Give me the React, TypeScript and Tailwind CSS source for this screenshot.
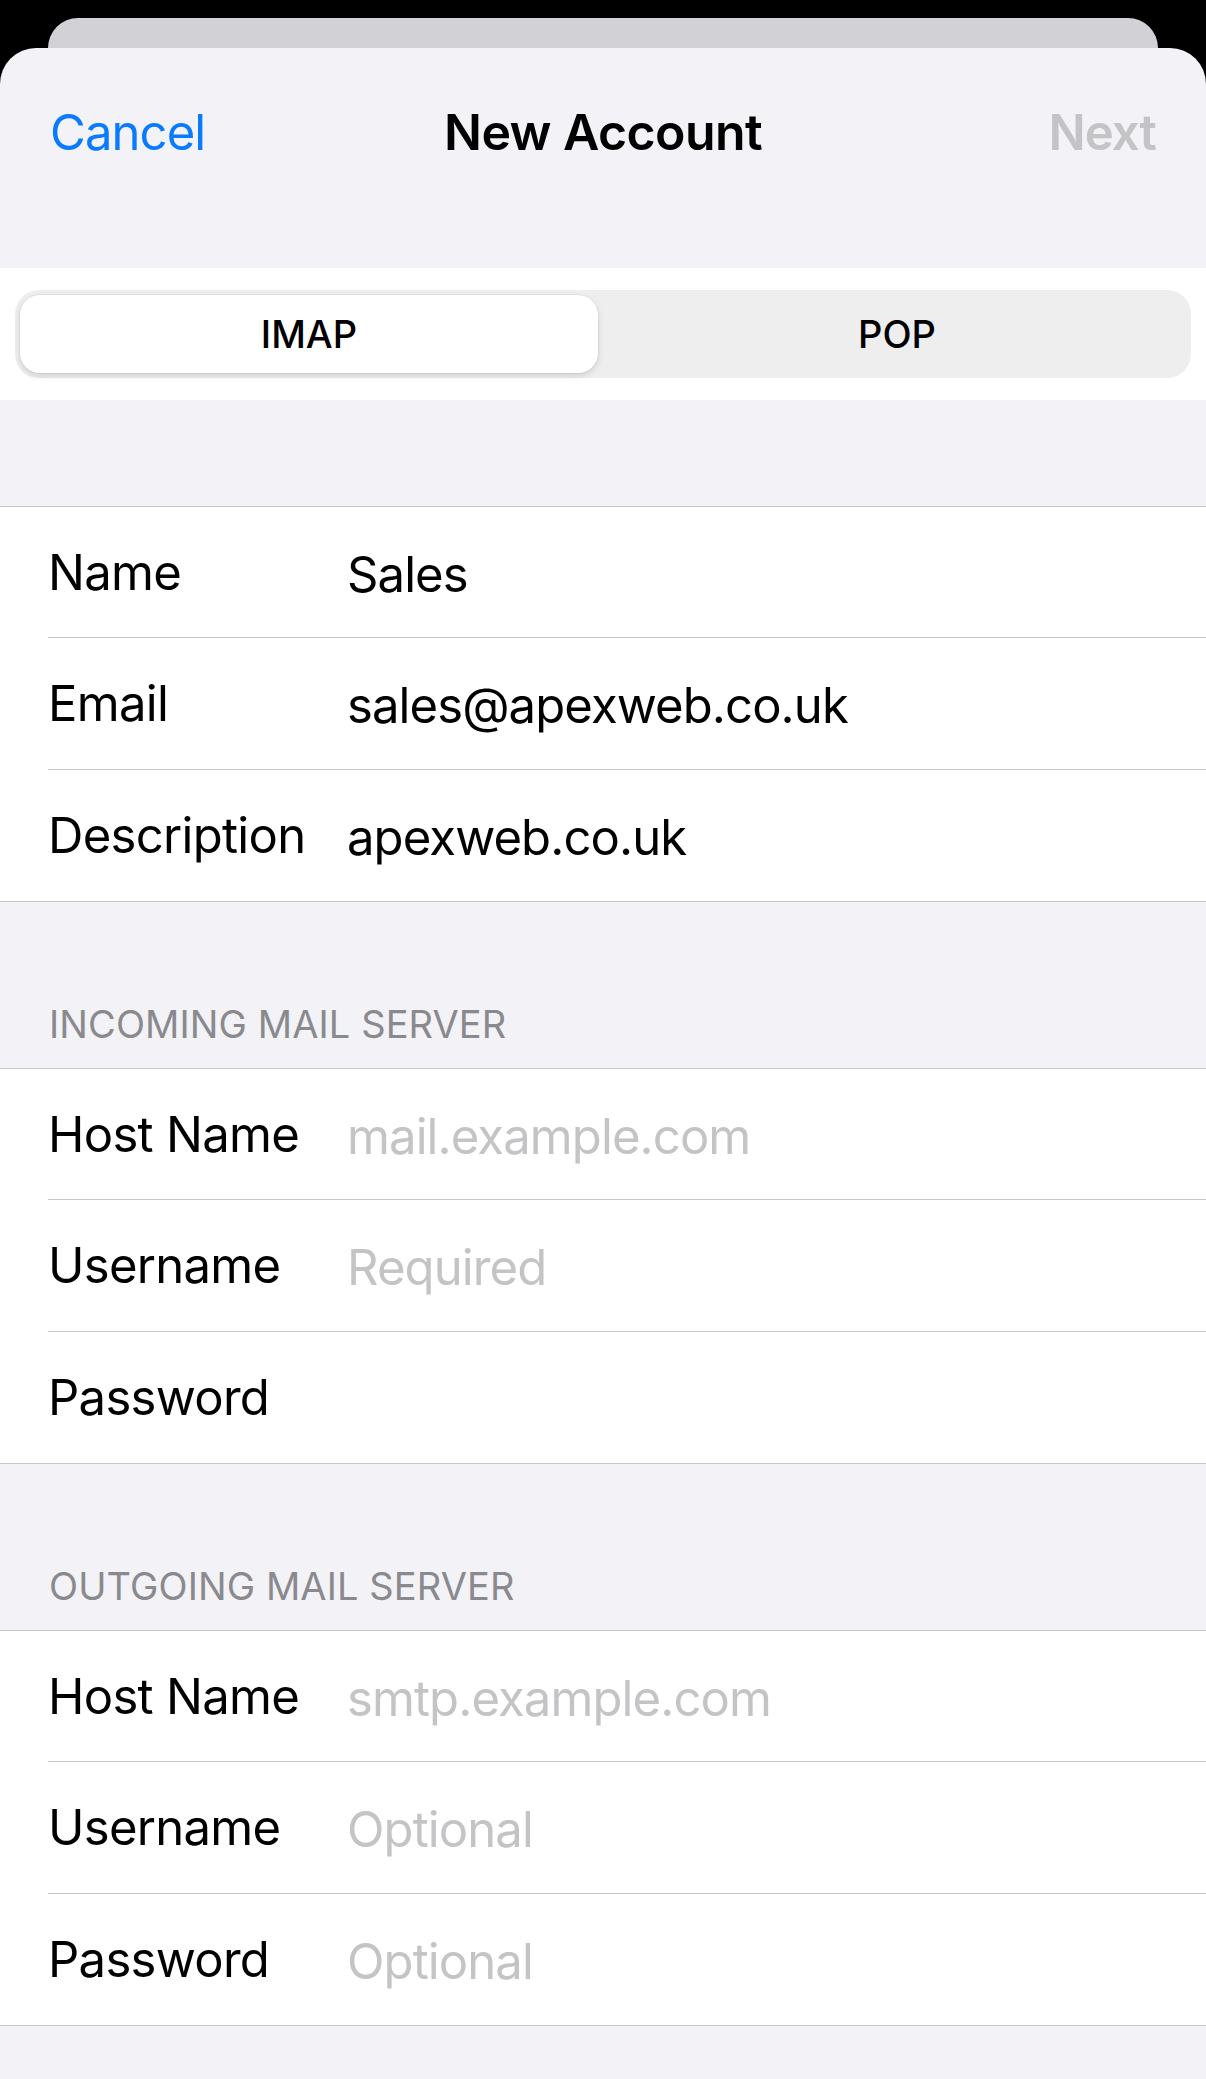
import React from 'react';

interface Field {
  label: string;
  value?: string;
  placeholder?: string;
}

const accountFields: Field[] = [
  { label: 'Name', value: 'Sales' },
  { label: 'Email', value: 'sales@apexweb.co.uk' },
  { label: 'Description', value: 'apexweb.co.uk' },
];

const incomingFields: Field[] = [
  { label: 'Host Name', placeholder: 'mail.example.com' },
  { label: 'Username', placeholder: 'Required' },
  { label: 'Password' },
];

const outgoingFields: Field[] = [
  { label: 'Host Name', placeholder: 'smtp.example.com' },
  { label: 'Username', placeholder: 'Optional' },
  { label: 'Password', placeholder: 'Optional' },
];

// row heights (incl. separator) so each group spans 395px like the native table
const rowHeights = ['h-[131px]', 'h-[132px]', 'h-[131px]'];

const FieldGroup: React.FC<{ fields: Field[] }> = ({ fields }) => (
  <div className="bg-white border-y border-[#c6c6c8]">
    {fields.map((f, i) => (
      <div key={f.label} className="pl-[48px]">
        <div
          className={`flex items-center ${rowHeights[i]} ${
            i < fields.length - 1 ? 'border-b border-[#c6c6c8]' : ''
          }`}
        >
          <span className="w-[299px] shrink-0 tracking-[-0.7px] text-black">{f.label}</span>
          {f.value && <span className="mt-[4px] text-black">{f.value}</span>}
          {!f.value && f.placeholder && (
            <span className="mt-[4px] text-[#c4c4c6]">{f.placeholder}</span>
          )}
        </div>
      </div>
    ))}
  </div>
);

const SectionHeader: React.FC<{ title: string }> = ({ title }) => (
  <div className="flex h-[166px] items-end pl-[49px] pb-[25px]">
    <span className="text-[38px] leading-none text-[#8a8a8e] tracking-[0.1px]">{title}</span>
  </div>
);

export default function App() {
  return (
    <div
      className="min-h-[2079px] w-full bg-black"
      style={{ fontFamily: 'Inter, "Noto Sans", "Liberation Sans", sans-serif' }}
    >
      {/* sheet stacked behind */}
      <div className="px-[48px] pt-[18px]">
        <div className="h-[30px] rounded-t-[30px] bg-[#d1d1d6]" />
      </div>

      <div className="flex min-h-[2031px] flex-col rounded-t-[36px] bg-[#f2f2f7] text-[49px] leading-none tracking-[-0.9px]">
        {/* Nav bar */}
        <div className="h-[220px]">
          <div className="grid h-[168px] grid-cols-[1fr_auto_1fr] items-center px-[50px]">
            <span className="justify-self-start text-[#0a7aff]">Cancel</span>
            <span className="text-[50px] font-semibold tracking-[-0.6px] text-black">New Account</span>
            <span className="justify-self-end font-semibold text-[#c4c4c6]">Next</span>
          </div>
        </div>

        {/* Segmented control */}
        <div className="bg-white px-[15px] py-[22px]">
          <div className="flex h-[88px] gap-[10px] rounded-[24px] bg-[#eeeeef] p-[5px]">
            <div className="flex flex-1 items-center justify-center rounded-[20px] bg-white text-[38px] font-medium tracking-normal text-black shadow-[0_3px_6px_rgba(0,0,0,0.12),0_0_0_1px_rgba(0,0,0,0.04)]">
              IMAP
            </div>
            <div className="flex flex-1 items-center justify-center text-[38px] font-medium tracking-normal text-black">
              POP
            </div>
          </div>
        </div>

        <div className="h-[106px]" />
        <FieldGroup fields={accountFields} />

        <SectionHeader title="INCOMING MAIL SERVER" />
        <FieldGroup fields={incomingFields} />

        <SectionHeader title="OUTGOING MAIL SERVER" />
        <FieldGroup fields={outgoingFields} />

        <div className="flex-1" />
      </div>
    </div>
  );
}
